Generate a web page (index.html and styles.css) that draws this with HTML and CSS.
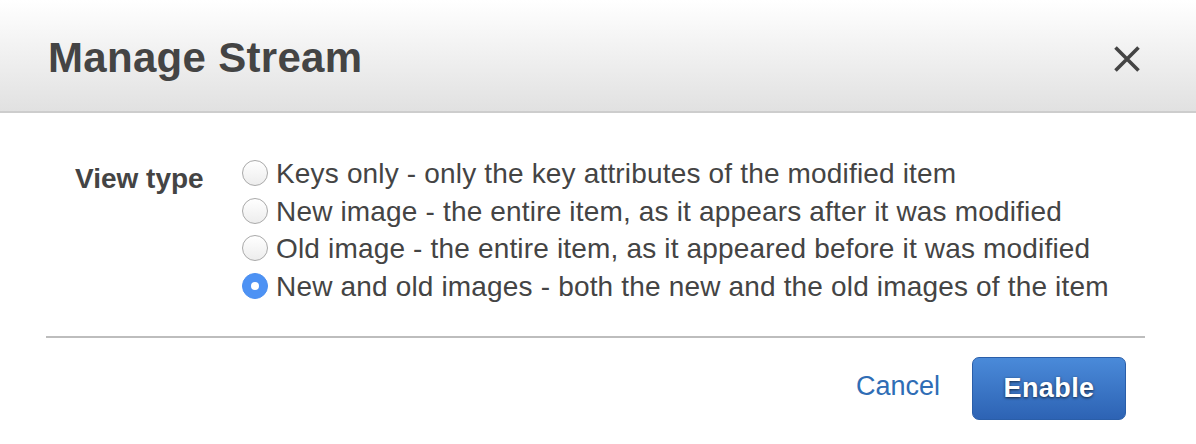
FILE: index.html
```html
<!DOCTYPE html>
<html lang="en">
<head>
<meta charset="utf-8">
<title>Manage Stream</title>
<link rel="stylesheet" href="styles.css">
</head>
<body>
<div class="dialog">
  <div class="dialog-header">
    <h1 class="dialog-title">Manage Stream</h1>
    <button class="close-btn" aria-label="Close">
      <svg width="28" height="28" viewBox="0 0 28 28"><path d="M2.5 2.5 L25.5 25.5 M25.5 2.5 L2.5 25.5" stroke="#444" stroke-width="3.6" fill="none"/></svg>
    </button>
  </div>
  <div class="dialog-body">
    <div class="form-row">
      <div class="form-label">View type</div>
      <div class="options">
        <label class="option"><span class="radio"></span><span class="option-text">Keys only - only the key attributes of the modified item</span></label>
        <label class="option"><span class="radio"></span><span class="option-text">New image - the entire item, as it appears after it was modified</span></label>
        <label class="option"><span class="radio"></span><span class="option-text">Old image - the entire item, as it appeared before it was modified</span></label>
        <label class="option"><span class="radio checked"></span><span class="option-text">New and old images - both the new and the old images of the item</span></label>
      </div>
    </div>
    <div class="divider"></div>
    <div class="footer">
      <a class="cancel-link">Cancel</a>
      <button class="enable-btn">Enable</button>
    </div>
  </div>
</div>
</body>
</html>
```
FILE: styles.css
```css
html, body {
  margin: 0;
  padding: 0;
  background: #fff;
}
body {
  font-family: "Liberation Sans", Arial, Helvetica, sans-serif;
  color: #444;
}
.dialog {
  width: 1196px;
  height: 444px;
  overflow: hidden;
}
.dialog-header {
  box-sizing: border-box;
  height: 113px;
  padding: 37px 55px 0 48px;
  display: flex;
  justify-content: space-between;
  align-items: flex-start;
  background: linear-gradient(#ffffff, #e1e1e1);
  border-bottom: 2px solid #cdcdcd;
}
.dialog-title {
  margin: 0;
  font-size: 42px;
  line-height: 42px;
  font-weight: bold;
  letter-spacing: 0.3px;
  color: #444;
}
.close-btn {
  margin-top: 8px;
  padding: 0;
  border: 0;
  background: none;
  width: 28px;
  height: 28px;
  display: block;
}
.close-btn svg { display: block; }
.dialog-body {
  padding: 0 51px 0 46px;
}
.form-row {
  display: flex;
  margin-top: 42px;
  padding-left: 29px;
}
.form-label {
  width: 167px;
  font-size: 28px;
  line-height: 37.7px;
  font-weight: bold;
  padding-top: 5px;
  color: #444;
}
.options {
  display: flex;
  flex-direction: column;
}
.option {
  display: flex;
  align-items: center;
  font-size: 28px;
  line-height: 37.7px;
  height: 37.7px;
  letter-spacing: 0.17px;
  color: #444;
}
.radio {
  box-sizing: border-box;
  width: 26px;
  height: 26px;
  border-radius: 50%;
  border: 1px solid #a9a9a9;
  background: linear-gradient(#ffffff, #ededed);
  margin-right: 8px;
  margin-top: -2px;
  flex: none;
  position: relative;
}
.radio.checked {
  border-color: #4b8ff0;
  background: #4d92f4;
}
.radio.checked::after {
  content: "";
  position: absolute;
  left: 50%;
  top: 50%;
  width: 8px;
  height: 8px;
  margin: -4px 0 0 -4px;
  border-radius: 50%;
  background: #fff;
}
.divider {
  margin-top: 30px;
  height: 2px;
  background: #bdbdbd;
}
.footer {
  display: flex;
  justify-content: flex-end;
  align-items: center;
  gap: 32px;
  margin-top: 19px;
  padding-right: 19px;
}
.cancel-link {
  font-size: 27px;
  color: #2f6db5;
  margin-bottom: 4px;
  cursor: pointer;
}
.enable-btn {
  box-sizing: border-box;
  width: 154px;
  height: 63px;
  border: 1px solid #2a5ea9;
  border-radius: 7px;
  background: linear-gradient(#4a8ad9, #2d63b4);
  color: #fff;
  font-family: "Liberation Sans", Arial, Helvetica, sans-serif;
  font-size: 27px;
  font-weight: bold;
  letter-spacing: 0.4px;
  text-shadow: 0 1px 3px rgba(0, 0, 0, 0.7);
  padding: 0;
}
```
